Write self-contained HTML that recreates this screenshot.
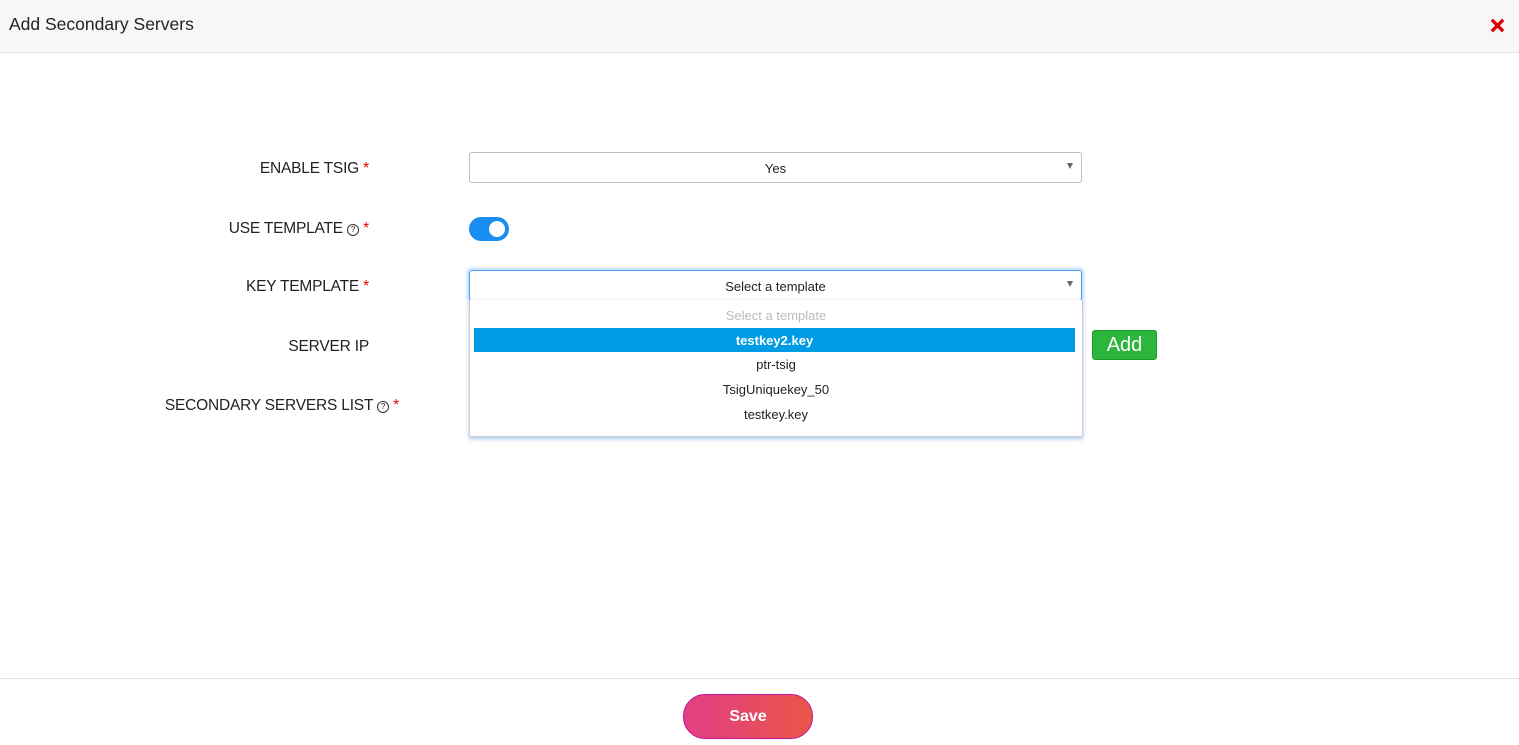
<!DOCTYPE html>
<html><head><style>
body{margin:0;width:1519px;height:745px;background:#fff;font-family:"Liberation Sans",sans-serif;position:relative;overflow:hidden}
.hdr{position:absolute;left:0;top:0;width:1519px;height:52px;background:#f7f7f7;border-bottom:1px solid #e6e6e6}
.hdr .t{position:absolute;left:9px;top:14px;font-size:17.5px;color:#222}
.x{position:absolute;left:1489px;top:17px;width:17px;height:17px}
.lbl{position:absolute;font-size:15.5px;color:#222;text-align:right;white-space:nowrap;letter-spacing:-0.2px}
.lbl b{color:#e00;font-weight:normal}
.q{display:inline-block;width:10px;height:10px;border:1px solid #333;border-radius:50%;font-size:8px;line-height:10px;text-align:center;vertical-align:1px;letter-spacing:0}
.sel{position:absolute;left:469px;width:611px;height:29px;border:1px solid #b7c0cc;border-radius:3px;font-size:13px;color:#222;text-align:center;line-height:31px;box-sizing:content-box}
.arr{position:absolute;right:8px;top:10px;width:0;height:0;border-left:3.5px solid transparent;border-right:3.5px solid transparent;border-top:6px solid #666}
.dd{position:absolute;left:469px;top:300px;width:612px;height:136px;border:1px solid #ccc;border-top:none;box-shadow:0 2px 4px rgba(80,150,230,.5);background:#fff;font-size:13px;text-align:center}
.dd div{height:25px;line-height:26px;color:#222}
</style></head><body>
<div class="hdr"><div class="t">Add Secondary Servers</div>
<svg class="x" viewBox="0 0 18 18"><path d="M3 3L15 15M15 3L3 15" stroke="#d00" stroke-width="3.5"/></svg></div>
<div class="lbl" style="right:1150px;top:160px">ENABLE TSIG <b>*</b></div>
<div class="lbl" style="right:1150px;top:220px">USE TEMPLATE <span class="q">?</span> <b>*</b></div>
<div class="lbl" style="right:1150px;top:278px">KEY TEMPLATE <b>*</b></div>
<div class="lbl" style="right:1150px;top:338px">SERVER IP</div>
<div class="lbl" style="right:1120px;top:397px">SECONDARY SERVERS LIST <span class="q">?</span> <b>*</b></div>
<div class="sel" style="top:152px">Yes<span class="arr"></span></div>
<div style="position:absolute;left:469px;top:217px;width:40px;height:24px;border-radius:12px;background:#1a8df0"><div style="position:absolute;left:20px;top:4px;width:16px;height:16px;border-radius:50%;background:#fff"></div></div>
<div class="sel" style="top:270px;border-color:#4d9ef0;box-shadow:0 0 3px 2px #b8dafc;height:29px">Select a template<span class="arr"></span></div>
<div class="dd">
<div style="color:#bbb;margin-top:3px">Select a template</div>
<div style="background:#009be5;color:#fff;font-weight:bold;margin:0 7px 0 4px;height:24px;line-height:25px">testkey2.key</div>
<div>ptr-tsig</div><div>TsigUniquekey_50</div><div>testkey.key</div></div>
<div style="position:absolute;left:1092px;top:330px;width:63px;height:28px;background:#2db63c;border:1px solid #1f9a2e;border-radius:3px;color:#fff;font-size:20px;text-align:center;line-height:29px">Add</div>
<div style="position:absolute;left:0;top:678px;width:1519px;border-top:1px solid #e3e3e3"></div>
<div style="position:absolute;left:683px;top:694px;width:128px;height:43px;border:1px solid #c0139a;border-radius:22px;background:linear-gradient(90deg,#e13f84,#ea5548);color:#fff;font-size:16px;font-weight:bold;text-align:center;line-height:44px">Save</div>
</body></html>
